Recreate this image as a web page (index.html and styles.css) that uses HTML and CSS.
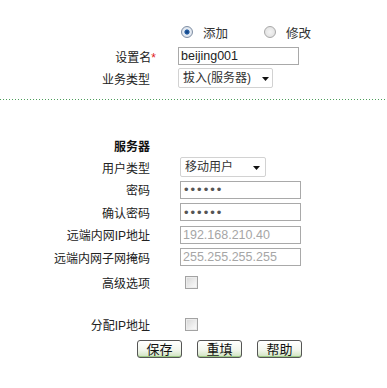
FILE: index.html
```html
<!DOCTYPE html>
<html lang="zh-CN">

<head>
    <meta charset="UTF-8">
    <meta name="viewport" content="width=device-width, initial-scale=1.0">
    <title>设置</title>
    <link rel="stylesheet" href="styles.css">
</head>

<body>
    <form class="form">
        <div class="section section-top">
            <div class="row row-radio">
                <div class="label"></div>
                <div class="field">
                    <label class="radio"><input type="radio" name="mode" checked><span>添加</span></label>
                    <label class="radio"><input type="radio" name="mode"><span>修改</span></label>
                </div>
            </div>
            <div class="row">
                <div class="label">设置名<span class="req">*</span></div>
                <div class="field"><input type="text" class="text" value="beijing001"></div>
            </div>
            <div class="row row-select">
                <div class="label">业务类型</div>
                <div class="field">
                    <select class="select select-type">
                        <option>拔入(服务器)</option>
                    </select>
                </div>
            </div>
        </div>

        <div class="divider"></div>

        <div class="section section-server">
            <div class="row row-title">
                <div class="label title">服务器</div>
            </div>
            <div class="row">
                <div class="label">用户类型</div>
                <div class="field">
                    <select class="select select-user">
                        <option>移动用户</option>
                    </select>
                </div>
            </div>
            <div class="row">
                <div class="label">密码</div>
                <div class="field"><input type="password" class="text pwd" value="123456"></div>
            </div>
            <div class="row">
                <div class="label">确认密码</div>
                <div class="field"><input type="password" class="text pwd" value="123456"></div>
            </div>
            <div class="row">
                <div class="label">远端内网IP地址</div>
                <div class="field"><input type="text" class="text" placeholder="192.168.210.40"></div>
            </div>
            <div class="row">
                <div class="label">远端内网子网掩码</div>
                <div class="field"><input type="text" class="text" placeholder="255.255.255.255"></div>
            </div>
            <div class="row row-adv">
                <div class="label">高级选项</div>
                <div class="field"><input type="checkbox" class="check"></div>
            </div>
            <div class="row row-assign">
                <div class="label">分配IP地址</div>
                <div class="field"><input type="checkbox" class="check"></div>
            </div>
            <div class="buttons">
                <button type="button" class="btn">保存</button>
                <button type="button" class="btn">重填</button>
                <button type="button" class="btn">帮助</button>
            </div>
        </div>
    </form>
</body>

</html>
```

FILE: styles.css
```css
* {
    margin: 0;
    padding: 0;
    box-sizing: border-box;
}

body {
    background: #fff;
    font-family: "Liberation Sans", "Noto Sans CJK SC", sans-serif;
    font-size: 12px;
    color: #222;
}

.section-top {
    padding-top: 19px;
}

.row {
    display: flex;
    align-items: center;
    height: 22px;
}

.row-radio {
    height: 26px;
}

.label {
    width: 150px;
    text-align: right;
    white-space: nowrap;
    flex-shrink: 0;
}

.req {
    color: #e0201a;
    margin-right: -6px;
    font-family: "Liberation Sans", sans-serif;
}

.field {
    margin-left: 28px;
    display: flex;
    align-items: center;
}

.section-server .field {
    margin-left: 30px;
}

/* radio buttons */
.radio {
    display: flex;
    align-items: center;
    margin-left: 3px;
    margin-right: 33px;
    font-size: 12.5px;
    color: #333;
}

.radio input {
    appearance: none;
    -webkit-appearance: none;
    width: 12px;
    height: 12px;
    border-radius: 50%;
    border: 1px solid #a8a8a8;
    background: radial-gradient(circle, #f4f4f4 0%, #dcdcdc 100%);
    margin-right: 10px;
}

.radio input:checked {
    border-color: #7f8ea3;
    background: radial-gradient(circle, #0c3a7a 0, #2a63a8 2.2px, #e8eef6 3px, #cfd6df 100%);
}

/* text inputs */
.text {
    width: 121px;
    height: 18px;
    border: 1px solid #a9a9a9;
    padding: 0 2px;
    font-family: "Liberation Sans", sans-serif;
    font-size: 12.5px;
    color: #222;
    outline: none;
}

.text::placeholder {
    color: #a6a6a6;
}

.pwd {
    color: #555;
    font-size: 13px;
    letter-spacing: 2px;
    padding-left: 3px;
}

/* selects */
.select {
    appearance: none;
    -webkit-appearance: none;
    height: 20px;
    border: 1px solid #d2d2d2;
    border-radius: 2px;
    padding-left: 4px;
    font-family: "Liberation Sans", "Noto Sans CJK SC", sans-serif;
    font-size: 12px;
    color: #333;
    background: #fff url("data:image/svg+xml;utf8,<svg xmlns='http://www.w3.org/2000/svg' width='7' height='4'><path d='M0 0h7L3.5 4z' fill='%23111'/></svg>") no-repeat;
    outline: none;
}

.select-type {
    width: 95px;
    background-position: 83px 8px;
}

.select-user {
    width: 86px;
    background-position: 72px 8px;
}

.divider {
    margin-top: 10px;
    height: 1px;
    background: repeating-linear-gradient(90deg, #4e9e5b 0 1px, transparent 1px 3px);
}

/* server section */
.section-server {
    padding-top: 34px;
}

.section-server .row {
    height: 22.5px;
}

.section-server .row-title {
    height: 22px;
}

.title {
    font-weight: bold;
    color: #111;
}

.row-adv {
    margin-top: 3px;
}

.section-server .row-assign {
    margin-top: 19px;
}

.check {
    appearance: none;
    -webkit-appearance: none;
    width: 13px;
    height: 13px;
    margin-left: 5px;
    border: 1px solid #a3a3a3;
    background: linear-gradient(135deg, #d6d6d6 0%, #f2f2f2 70%, #fafafa 100%);
    box-shadow: inset 0 0 0 1px #ececec;
}

.buttons {
    display: flex;
    gap: 15px;
    padding-left: 137px;
    margin-top: 4px;
}

.btn {
    width: 45px;
    height: 18px;
    border: 1px solid #555;
    border-radius: 3px;
    background: linear-gradient(#ffffff 0%, #f3f7ee 55%, #cfe3bf 100%);
    box-shadow: inset 0 -1px 0 #9cc985;
    font-family: "Noto Sans CJK SC", sans-serif;
    font-size: 13px;
    line-height: 15px;
    color: #111;
    cursor: pointer;
}
```
